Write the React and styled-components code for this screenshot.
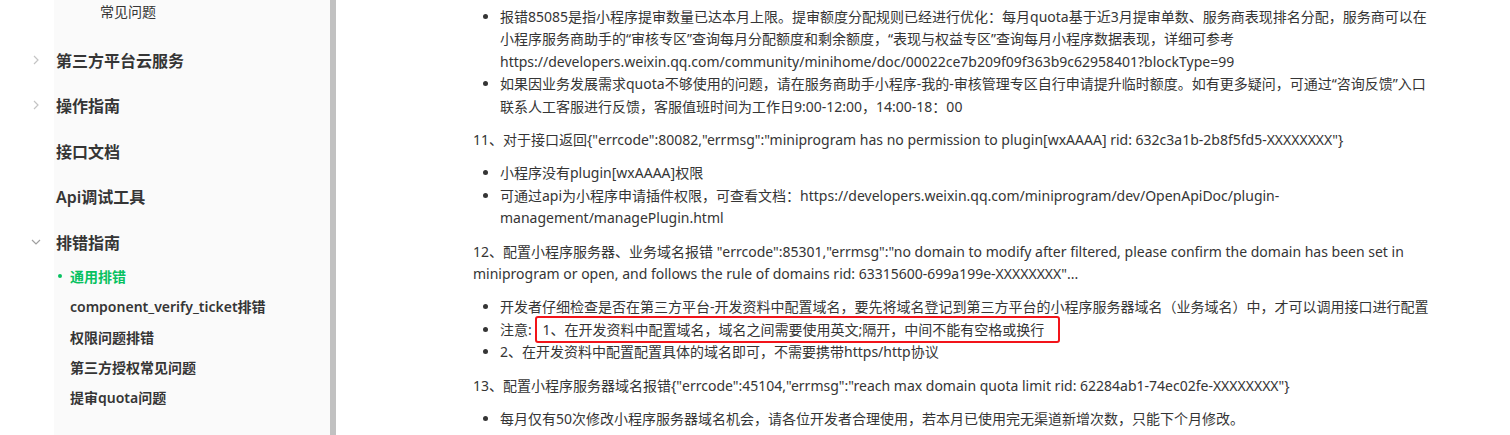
import React from 'react'
import styled, { createGlobalStyle } from 'styled-components'

const GlobalStyle = createGlobalStyle`
  html, body {
    margin: 0;
    padding: 0;
    background: #fff;
  }
  body {
    font-family: "Noto Sans", "Noto Sans CJK SC", sans-serif;
    color: #353535;
    overflow: hidden;
  }
`

const Page = styled.div`
  display: flex;
  height: 435px;
  overflow: hidden;
`

const Sidebar = styled.nav`
  flex: 0 0 330px;
  background: linear-gradient(to right, #fff 54px, #fafafa 54px);
  border-right: 6px solid #c1c1c1;
`

const Leaf = styled.div`
  height: 37px;
  padding-left: 100px;
  font-size: 14px;
  line-height: 24px;
`

const Group = styled.div`
  display: flex;
  align-items: center;
  height: 45.5px;
  font-size: 16px;
  font-weight: 600;
  color: #353535;
`

const Caret = styled.span`
  display: flex;
  align-items: center;
  width: 56px;
  padding-left: ${(p) => (p.$open ? '31px' : '33px')};
  box-sizing: border-box;
`

const SubList = styled.div`
  margin-top: -3.5px;
`

const SubItem = styled.div`
  display: flex;
  align-items: center;
  height: 30.25px;
  padding-left: ${(p) => (p.$active ? '58px' : '70px')};
  font-size: 14px;
  font-weight: 600;
  color: ${(p) => (p.$active ? '#07c160' : '#353535')};
`

const Dot = styled.span`
  width: 4px;
  height: 4px;
  border-radius: 50%;
  background: #07c160;
  margin-right: 8px;
`

const Main = styled.main`
  flex: 1;
  padding: 6px 73px 0 137px;
  font-size: 14px;
  line-height: 22.4px;
  color: #353535;
`

const Para = styled.p`
  margin: 11px 0;
`

const List = styled.ul`
  margin: 11px 0;
  padding-left: 27px;
  &:first-child {
    margin-top: 0;
  }
`

const Item = styled.li``

const Mark = styled.span`
  border: 2px solid #f2141a;
  border-radius: 3px;
  padding: 2px 14px 2px 5px;
`

function ChevronRight() {
  return (
    <svg width="6" height="10" viewBox="0 0 6 10">
      <path d="M1 1l4 4-4 4" fill="none" stroke="#c4c4c4" strokeWidth="1.2" />
    </svg>
  )
}

function ChevronDown() {
  return (
    <svg width="10" height="6" viewBox="0 0 10 6">
      <path d="M1 1l4 4 4-4" fill="none" stroke="#a0a0a0" strokeWidth="1.2" />
    </svg>
  )
}

const groups = [
  { label: '第三方平台云服务', icon: 'right' },
  { label: '操作指南', icon: 'right' },
  { label: '接口文档' },
  { label: 'Api调试工具' },
  { label: '排错指南', icon: 'down' },
]

const subItems = [
  '通用排错',
  'component_verify_ticket排错',
  '权限问题排错',
  '第三方授权常见问题',
  '提审quota问题',
]

export default function App() {
  return (
    <Page>
      <GlobalStyle />
      <Sidebar>
        <Leaf>常见问题</Leaf>
        {groups.map((g) => (
          <Group key={g.label}>
            <Caret $open={g.icon === 'down'}>
              {g.icon === 'right' && <ChevronRight />}
              {g.icon === 'down' && <ChevronDown />}
            </Caret>
            {g.label}
          </Group>
        ))}
        <SubList>
          {subItems.map((s, i) => (
            <SubItem key={s} $active={i === 0}>
              {i === 0 && <Dot />}
              {s}
            </SubItem>
          ))}
        </SubList>
      </Sidebar>

      <Main>
        <List>
          <Item>
            报错85085是指小程序提审数量已达本月上限。提审额度分配规则已经进行优化：每月quota基于近3月提审单数、服务商表现排名分配，服务商可以在小程序服务商助手的“审核专区”查询每月分配额度和剩余额度，“表现与权益专区”查询每月小程序数据表现，详细可参考https://developers.weixin.qq.com/community/minihome/doc/00022ce7b209f09f363b9c62958401?blockType=99
          </Item>
          <Item>
            如果因业务发展需求quota不够使用的问题，请在服务商助手小程序-我的-审核管理专区自行申请提升临时额度。如有更多疑问，可通过“咨询反馈”入口联系人工客服进行反馈，客服值班时间为工作日9:00-12:00，14:00-18：00
          </Item>
        </List>

        <Para>
          11、对于接口返回{'{'}"errcode":80082,"errmsg":"miniprogram has no permission to plugin[wxAAAA] rid: 632c3a1b-2b8f5fd5-XXXXXXXX"{'}'}
        </Para>
        <List>
          <Item>小程序没有plugin[wxAAAA]权限</Item>
          <Item>
            可通过api为小程序申请插件权限，可查看文档：https://developers.weixin.qq.com/miniprogram/dev/OpenApiDoc/plugin-management/managePlugin.html
          </Item>
        </List>

        <Para>
          12、配置小程序服务器、业务域名报错 "errcode":85301,"errmsg":"no domain to modify after filtered, please confirm the domain has been set in miniprogram or open, and follows the rule of domains rid: 63315600-699a199e-XXXXXXXX"...
        </Para>
        <List>
          <Item>
            开发者仔细检查是否在第三方平台-开发资料中配置域名，要先将域名登记到第三方平台的小程序服务器域名（业务域名）中，才可以调用接口进行配置
          </Item>
          <Item>
            注意: <Mark>1、在开发资料中配置域名，域名之间需要使用英文;隔开，中间不能有空格或换行</Mark>
          </Item>
          <Item>2、在开发资料中配置配置具体的域名即可，不需要携带https/http协议</Item>
        </List>

        <Para>
          13、配置小程序服务器域名报错{'{'}"errcode":45104,"errmsg":"reach max domain quota limit rid: 62284ab1-74ec02fe-XXXXXXXX"{'}'}
        </Para>
        <List>
          <Item>
            每月仅有50次修改小程序服务器域名机会，请各位开发者合理使用，若本月已使用完无渠道新增次数，只能下个月修改。
          </Item>
        </List>
      </Main>
    </Page>
  )
}
